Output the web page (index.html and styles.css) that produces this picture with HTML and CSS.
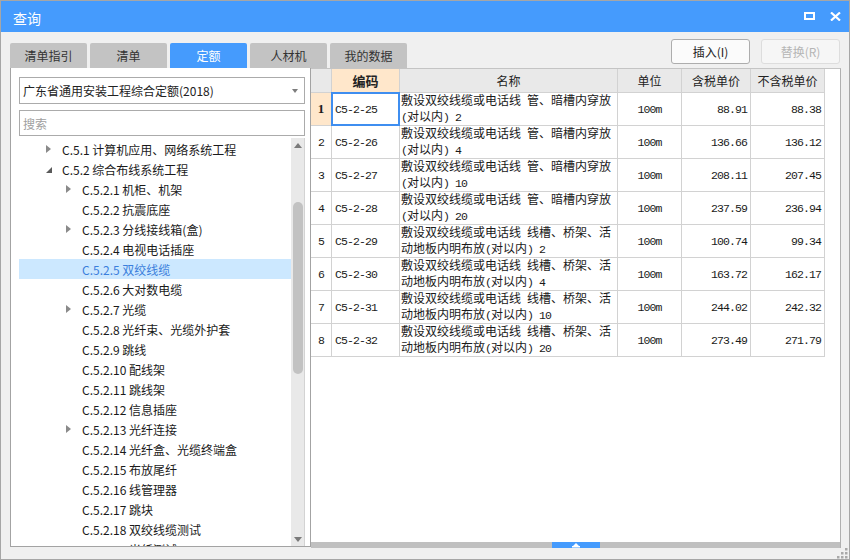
FILE: index.html
```html
<!DOCTYPE html>
<html lang="zh-CN">
<head>
<meta charset="utf-8">
<title>查询</title>
<link rel="stylesheet" href="styles.css">
</head>
<body>
<div class="win">
  <div class="titlebar">
    <span class="title">查询</span>
    <div class="ctrls">
      <svg class="ic-max" width="11" height="9" viewBox="0 0 11 9"><rect x="1" y="1" width="9" height="6" fill="none" stroke="#fff" stroke-width="2"/></svg>
      <svg class="ic-close" width="11" height="9" viewBox="0 0 11 9"><path d="M1 0.5 L10 8.5 M10 0.5 L1 8.5" stroke="#fff" stroke-width="2.2" fill="none"/></svg>
    </div>
  </div>

  <div class="toolbar">
    <div class="tabs">
      <div class="tab">清单指引</div>
      <div class="tab">清单</div>
      <div class="tab active">定额</div>
      <div class="tab">人材机</div>
      <div class="tab">我的数据</div>
    </div>
    <div class="btns">
      <div class="btn">插入(I)</div>
      <div class="btn dis">替换(R)</div>
    </div>
  </div>

  <div class="main">
    <div class="left">
      <div class="combo"><span>广东省通用安装工程综合定额(2018)</span><i class="caret"></i></div>
      <div class="search">搜索</div>
      <div class="tree">
        <div class="list">
          <div class="row l1"><i class="arr col"></i><span>C.5.1 计算机应用、网络系统工程</span></div>
          <div class="row l1"><i class="arr exp"></i><span>C.5.2 综合布线系统工程</span></div>
          <div class="row l2"><i class="arr col"></i><span>C.5.2.1 机柜、机架</span></div>
          <div class="row l2"><i class="arr"></i><span>C.5.2.2 抗震底座</span></div>
          <div class="row l2"><i class="arr col"></i><span>C.5.2.3 分线接线箱(盒)</span></div>
          <div class="row l2"><i class="arr"></i><span>C.5.2.4 电视电话插座</span></div>
          <div class="row l2 sel"><i class="arr"></i><span>C.5.2.5 双绞线缆</span></div>
          <div class="row l2"><i class="arr"></i><span>C.5.2.6 大对数电缆</span></div>
          <div class="row l2"><i class="arr col"></i><span>C.5.2.7 光缆</span></div>
          <div class="row l2"><i class="arr"></i><span>C.5.2.8 光纤束、光缆外护套</span></div>
          <div class="row l2"><i class="arr"></i><span>C.5.2.9 跳线</span></div>
          <div class="row l2"><i class="arr"></i><span>C.5.2.10 配线架</span></div>
          <div class="row l2"><i class="arr"></i><span>C.5.2.11 跳线架</span></div>
          <div class="row l2"><i class="arr"></i><span>C.5.2.12 信息插座</span></div>
          <div class="row l2"><i class="arr col"></i><span>C.5.2.13 光纤连接</span></div>
          <div class="row l2"><i class="arr"></i><span>C.5.2.14 光纤盒、光缆终端盒</span></div>
          <div class="row l2"><i class="arr"></i><span>C.5.2.15 布放尾纤</span></div>
          <div class="row l2"><i class="arr"></i><span>C.5.2.16 线管理器</span></div>
          <div class="row l2"><i class="arr"></i><span>C.5.2.17 跳块</span></div>
          <div class="row l2"><i class="arr"></i><span>C.5.2.18 双绞线缆测试</span></div>
          <div class="row l2"><i class="arr"></i><span>C.5.2.19 光纤测试</span></div>
        </div>
        <div class="vscroll">
          <div class="sb-btn"><i class="up"></i></div>
          <div class="sb-gap"></div>
          <div class="thumb"></div>
          <div class="sb-rest"></div>
          <div class="sb-btn"><i class="down"></i></div>
        </div>
      </div>
    </div>

    <div class="right">
      <div class="grid">
        <div class="h rn"></div>
        <div class="h code">编码</div>
        <div class="h">名称</div>
        <div class="h">单位</div>
        <div class="h">含税单价</div>
        <div class="h">不含税单价</div>

        <div class="c rn cur">1</div>
        <div class="c cd selcell"><span class="m">C5-2-25</span></div>
        <div class="c nm"><div>敷设双绞线缆或电话线<span class="m"> </span>管、暗槽内穿放<br><span class="m">(</span>对以内<span class="m">) 2</span></div></div>
        <div class="c un"><span class="m">100m</span></div>
        <div class="c nu"><span class="m">88.91</span></div>
        <div class="c nu"><span class="m">88.38</span></div>

        <div class="c rn"><span class="m">2</span></div>
        <div class="c cd"><span class="m">C5-2-26</span></div>
        <div class="c nm"><div>敷设双绞线缆或电话线<span class="m"> </span>管、暗槽内穿放<br><span class="m">(</span>对以内<span class="m">) 4</span></div></div>
        <div class="c un"><span class="m">100m</span></div>
        <div class="c nu"><span class="m">136.66</span></div>
        <div class="c nu"><span class="m">136.12</span></div>

        <div class="c rn"><span class="m">3</span></div>
        <div class="c cd"><span class="m">C5-2-27</span></div>
        <div class="c nm"><div>敷设双绞线缆或电话线<span class="m"> </span>管、暗槽内穿放<br><span class="m">(</span>对以内<span class="m">) 10</span></div></div>
        <div class="c un"><span class="m">100m</span></div>
        <div class="c nu"><span class="m">208.11</span></div>
        <div class="c nu"><span class="m">207.45</span></div>

        <div class="c rn"><span class="m">4</span></div>
        <div class="c cd"><span class="m">C5-2-28</span></div>
        <div class="c nm"><div>敷设双绞线缆或电话线<span class="m"> </span>管、暗槽内穿放<br><span class="m">(</span>对以内<span class="m">) 20</span></div></div>
        <div class="c un"><span class="m">100m</span></div>
        <div class="c nu"><span class="m">237.59</span></div>
        <div class="c nu"><span class="m">236.94</span></div>

        <div class="c rn"><span class="m">5</span></div>
        <div class="c cd"><span class="m">C5-2-29</span></div>
        <div class="c nm"><div>敷设双绞线缆或电话线<span class="m"> </span>线槽、桥架、活<br>动地板内明布放<span class="m">(</span>对以内<span class="m">) 2</span></div></div>
        <div class="c un"><span class="m">100m</span></div>
        <div class="c nu"><span class="m">100.74</span></div>
        <div class="c nu"><span class="m">99.34</span></div>

        <div class="c rn"><span class="m">6</span></div>
        <div class="c cd"><span class="m">C5-2-30</span></div>
        <div class="c nm"><div>敷设双绞线缆或电话线<span class="m"> </span>线槽、桥架、活<br>动地板内明布放<span class="m">(</span>对以内<span class="m">) 4</span></div></div>
        <div class="c un"><span class="m">100m</span></div>
        <div class="c nu"><span class="m">163.72</span></div>
        <div class="c nu"><span class="m">162.17</span></div>

        <div class="c rn"><span class="m">7</span></div>
        <div class="c cd"><span class="m">C5-2-31</span></div>
        <div class="c nm"><div>敷设双绞线缆或电话线<span class="m"> </span>线槽、桥架、活<br>动地板内明布放<span class="m">(</span>对以内<span class="m">) 10</span></div></div>
        <div class="c un"><span class="m">100m</span></div>
        <div class="c nu"><span class="m">244.02</span></div>
        <div class="c nu"><span class="m">242.32</span></div>

        <div class="c rn"><span class="m">8</span></div>
        <div class="c cd"><span class="m">C5-2-32</span></div>
        <div class="c nm"><div>敷设双绞线缆或电话线<span class="m"> </span>线槽、桥架、活<br>动地板内明布放<span class="m">(</span>对以内<span class="m">) 20</span></div></div>
        <div class="c un"><span class="m">100m</span></div>
        <div class="c nu"><span class="m">273.49</span></div>
        <div class="c nu"><span class="m">271.79</span></div>
      </div>
      <div class="fill"></div>
      <div class="hbar"><div class="handle"><svg width="8" height="5" viewBox="0 0 8 5"><path d="M4 0 L7 3 L1 3 Z" fill="#fff"/><rect x="0" y="3" width="8" height="1.5" fill="#fff"/></svg></div></div>
    </div>
  </div>

  <div class="bottom">
    <svg class="grip" width="11" height="11" viewBox="0 0 11 11">
      <rect x="8" y="0" width="2.5" height="2.5" fill="#a9a9a9"/>
      <rect x="4" y="4" width="2.5" height="2.5" fill="#a9a9a9"/>
      <rect x="8" y="4" width="2.5" height="2.5" fill="#a9a9a9"/>
      <rect x="0" y="8" width="2.5" height="2.5" fill="#a9a9a9"/>
      <rect x="4" y="8" width="2.5" height="2.5" fill="#a9a9a9"/>
      <rect x="8" y="8" width="2.5" height="2.5" fill="#a9a9a9"/>
    </svg>
  </div>
</div>
</body>
</html>
```
FILE: styles.css
```css
* { box-sizing: border-box; margin: 0; padding: 0; }
html, body { width: 850px; height: 560px; overflow: hidden; background: #f0f0f0; }
body { font-family: "Noto Sans CJK SC", "Noto Sans", sans-serif; font-size: 12px; color: #222; }

.win { width: 850px; height: 560px; border: 1px solid #a6a6a6; background: #f0f0f0; display: flex; flex-direction: column; }

.titlebar { height: 31px; flex: none; background: #459bfd; color: #fff; display: flex; align-items: center; padding: 0 8px 0 12px; }
.title { flex: 1; font-size: 14px; padding-top: 2px; }
.ctrls { display: flex; align-items: center; gap: 15px; }
.ctrls svg { display: block; }

.toolbar { height: 36px; flex: none; display: flex; justify-content: space-between; padding: 0 9px; }
.tabs { display: flex; gap: 3px; align-self: flex-end; }
.tab { width: 77px; height: 25px; background: #c3c3c3; border-radius: 2px 2px 0 0; color: #333; display: flex; align-items: center; justify-content: center; }
.tab.active { background: #459bfd; color: #fff; }
.btns { display: flex; gap: 11px; padding-top: 7px; }
.btn { width: 79px; height: 25px; border: 1px solid #adadad; border-radius: 3px; background: #fbfbfb; color: #222; display: flex; align-items: center; justify-content: center; }
.btn.dis { border-color: #dddddd; color: #b5b5b5; background: #f6f6f6; }

.main { height: 480px; flex: none; display: flex; align-items: flex-start; padding-left: 9px; }

.left { width: 301px; height: 479px; background: #fff; border-left: 1px solid #a3a3a3; border-right: 1px solid #a3a3a3; border-bottom: 1px solid #a3a3a3; padding: 9px 5px 0 8px; display: flex; flex-direction: column; }
.combo { height: 27px; flex: none; border: 1px solid #ababab; display: flex; align-items: center; justify-content: space-between; padding: 0 6px 0 3px; color: #222; }
.caret { width: 0; height: 0; border-top: 4px solid #7d7d7d; border-left: 3.5px solid transparent; border-right: 3.5px solid transparent; }
.search { height: 26px; flex: none; margin-top: 6px; border: 1px solid #ababab; display: flex; align-items: center; padding-left: 3px; color: #a0a0a0; }

.tree { height: 408px; flex: none; margin-top: 2px; display: flex; border-right: 1px solid #d3d3d3; }
.list { flex: 1; overflow: hidden; padding-top: 1px; }
.row { height: 20px; display: flex; align-items: center; white-space: nowrap; color: #1a1a1a; }
.row.l1 { padding-left: 24px; }
.row.l2 { padding-left: 44px; }
.row.sel { background: #cce8ff; color: #3b7fdc; }
.arr { width: 19px; height: 20px; flex: none; display: flex; align-items: center; }
.arr.col::before { content: ""; margin-left: 3px; width: 0; height: 0; border-left: 5px solid #8a8a8a; border-top: 4px solid transparent; border-bottom: 4px solid transparent; }
.arr.exp::before { content: ""; margin-left: 3px; margin-top: 1px; width: 0; height: 0; border-right: 6px solid #5a5a5a; border-top: 6px solid transparent; }

.vscroll { width: 13px; flex: none; background: #e9e9e9; display: flex; flex-direction: column; }
.sb-btn { height: 14px; flex: none; display: flex; align-items: center; justify-content: center; }
.up { width: 0; height: 0; border-bottom: 5px solid #7a7a7a; border-left: 4px solid transparent; border-right: 4px solid transparent; }
.down { width: 0; height: 0; border-top: 5px solid #7a7a7a; border-left: 4px solid transparent; border-right: 4px solid transparent; }
.sb-gap { height: 50px; flex: none; }
.thumb { height: 172px; flex: none; width: 10px; margin-left: 2px; border-radius: 5px; background: #c2c2c2; }
.sb-rest { flex: 1; }

.right { width: 530px; height: 480px; background: #fff; border-top: 1px solid #c4c4c4; border-right: 1px solid #b0b0b0; display: flex; flex-direction: column; }
.grid { width: 514px; flex: none; display: grid; grid-template-columns: 20px 67px 217px 63px 68px 73px; grid-template-rows: 23px repeat(8, 32px); gap: 1px; background: #d2d2d2; border-right: 1px solid #d2d2d2; border-bottom: 1px solid #d2d2d2; }
.h { background: #e9e9e9; display: flex; align-items: center; justify-content: center; color: #222; }
.h.code { background: #ffe7cb; font-weight: bold; font-size: 13px; }
.c { background: #fff; display: flex; align-items: center; color: #1a1a1a; white-space: nowrap; }
.rn { justify-content: center; }
.c.rn.cur { background: #ffe7cb; font-family: "Liberation Serif", serif; font-weight: bold; font-size: 13px; }
.cd { padding-left: 3px; }
.selcell { outline: 2px solid #3f8ef0; outline-offset: -1px; position: relative; z-index: 1; }
.nm { padding-left: 1px; line-height: 14px; }
.un { justify-content: center; }
.nu { justify-content: flex-end; padding-right: 3px; }
.m { font-family: "Liberation Mono", monospace; font-size: 11.5px; letter-spacing: -0.9px; }

.fill { flex: 1; }
.hbar { height: 6px; flex: none; background: #c0c0c0; display: flex; justify-content: center; }
.handle { width: 48px; height: 6px; background: #459bfd; display: flex; align-items: center; justify-content: center; }
.handle svg { display: block; }

.bottom { flex: 1; display: flex; justify-content: flex-end; align-items: flex-end; padding: 0 1px 1px 0; }
.grip { display: block; }
```
